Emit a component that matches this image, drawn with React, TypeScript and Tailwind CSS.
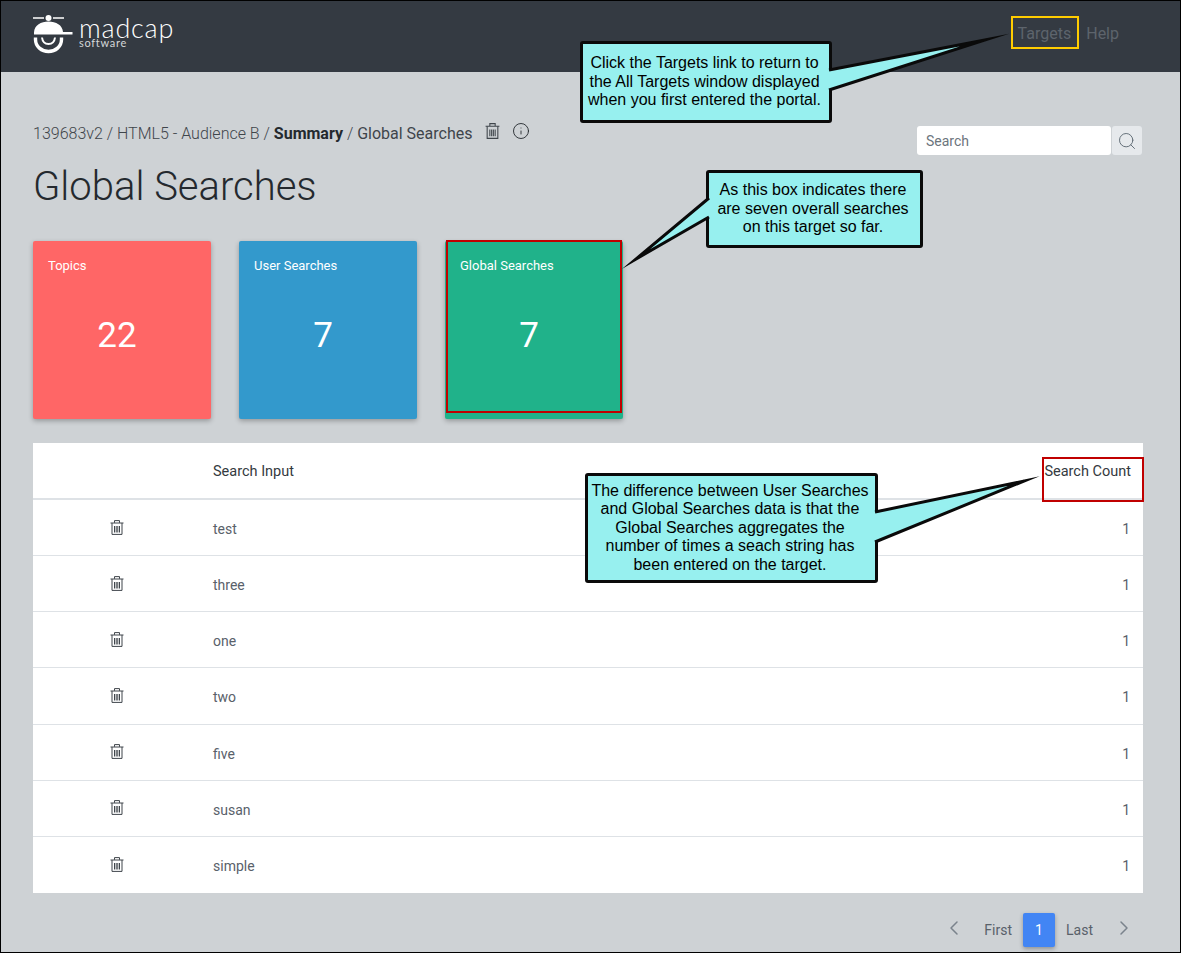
import { ChevronLeft, ChevronRight, Info, Search } from "lucide-react";

const rows = ["test", "three", "one", "two", "five", "susan", "simple"];

const cards = [
  { title: "Topics", count: "22", color: "bg-[#ff6666]" },
  { title: "User Searches", count: "7", color: "bg-[#3399cc]" },
  { title: "Global Searches", count: "7", color: "bg-[#20b28a]" },
];

const TrashIcon = ({ className }: { className?: string }) => (
  <svg viewBox="0 0 14 15" className={className} fill="none" stroke="currentColor">
    <path d="M0.5 3h13M4.5 2.8V0.6h5v2.2" strokeWidth="1" />
    <path d="M2 3v11.4h10V3" strokeWidth="1" />
    <path d="M4.5 6v6.5M6.2 6v6.5M7.8 6v6.5M9.5 6v6.5" strokeWidth="1" />
  </svg>
);

const Logo = () => (
  <div className="flex items-start">
    <svg viewBox="0 0 42 40" className="ml-[1px] mt-[13px] h-[40px] w-[42px] text-white" fill="currentColor">
      <path d="M0 3.2h11v1.6H0zM20 3.2h11v1.6H20z" />
      <circle cx="15.5" cy="4" r="3" />
      <path d="M1 18.5C1.500 11 8 7.500 15.500 7.500S29.500 11 30 18h9.500v2.500H1z" />
      <path
        d="M2.500 23.500v2c0 7 6 12 13 12s13-5 13-12v-2"
        fill="none"
        stroke="currentColor"
        strokeWidth="3.400"
      />
      <path
        d="M9 23.500c.5 4 3 6.500 6.500 6.500s6-2.500 6.500-6.500"
        fill="none"
        stroke="currentColor"
        strokeWidth="2"
      />
    </svg>
    <div className="ml-[4px] mt-[16px] text-white">
      <div className="font-['Lato'] text-[27px] font-light leading-[22px] tracking-[0.8px]">madcap</div>
      <div className="-mt-[1px] font-['Lato'] text-[11px] leading-[10px] tracking-[0.7px] text-[#d5d7d9]">software</div>
    </div>
  </div>
);

interface CalloutProps {
  boxClass: string;
  tailClass: string;
  viewBox: string;
  tail: string;
  children: React.ReactNode;
}

const Callout = ({ boxClass, tailClass, viewBox, tail, children }: CalloutProps) => (
  <>
    <div
      className={`absolute flex items-center justify-center rounded-[3px] border-[3px] border-[#0a0a0a] bg-[#97f0ef] pr-[3px] text-center font-['Liberation_Sans'] text-[16px] leading-[18.600px] text-black ${boxClass}`}
    >
      <div>{children}</div>
    </div>
    <svg viewBox={viewBox} className={`absolute ${tailClass}`}>
      <path d={tail} fill="#97f0ef" stroke="#0a0a0a" strokeWidth="3" strokeMiterlimit="30" />
    </svg>
  </>
);

export default function App() {
  return (
    <div className="relative h-[953px] w-[1181px] overflow-hidden border border-black bg-[#ced2d5] font-['Roboto',sans-serif]">
      {/* Шапка */}
      <header className="flex h-[71px] items-start justify-between bg-[#343a42] pl-[31px] pr-[61px]">
        <Logo />
        <nav className="mt-[23px] flex gap-[15px] text-[16px] leading-[20px] text-[#5d646c]">
          <a>Targets</a>
          <a>Help</a>
        </nav>
      </header>

      <main className="px-[32px]">
        <div className="flex justify-between">
          <div className="mt-[50px] flex items-start text-[16px] font-light leading-[24px] text-[#3f454b]">
            <span>
              139683v2 / HTML5 - Audience B / <b className="font-bold text-[#24292e]">Summary</b> /{" "}
              <span className="font-normal">Global Searches</span>
            </span>
            <TrashIcon className="ml-[12px] mt-[1px] h-[16px] w-[15px] text-[#3f454b]" />
            <Info className="ml-[12px] mt-[0px] h-[18px] w-[18px] text-[#24292e]" strokeWidth={1.2} />
          </div>
          <div className="mr-[6px] mt-[54px] flex h-[29px]">
            <div className="flex w-[194px] items-center rounded-[3px] bg-white pl-[9px] pt-[1px] text-[14px] text-[#6c757d]">
              Search
            </div>
            <div className="ml-[1px] flex w-[30px] items-center justify-center rounded-[3px] bg-[#e6e9ec]">
              <Search className="h-[20px] w-[20px] text-[#5a6670]" strokeWidth={1.1} />
            </div>
          </div>
        </div>

        <h1 className="mt-[8px] text-[40px] font-light leading-[48px] text-[#24292e]">Global Searches</h1>

        <div className="mt-[30px] flex gap-[28px]">
          {cards.map((card) => (
            <div
              key={card.title}
              className={`h-[178px] w-[178px] rounded-[2px] px-[15px] pt-[16px] text-white shadow-[0_2px_5px_rgba(0,0,0,0.28)] ${card.color}`}
            >
              <div className="text-[13px] leading-[18px]">{card.title}</div>
              <div className="mt-[39px] pr-[10px] text-center text-[35px] leading-[44px]">{card.count}</div>
            </div>
          ))}
        </div>

        <div className="mt-[24px] w-[1110px] bg-white text-[14px] text-[#59616a]">
          <div className="flex h-[57px] items-center border-b-2 border-[#dee2e6] pt-[3px] text-[14.500px] text-[#343a40]">
            <div className="w-[180px]" />
            <div className="flex-1">Search Input</div>
            <div className="pr-[12px]">Search Count</div>
          </div>
          {rows.map((row, i) => (
            <div
              key={row}
              className={`flex h-[56.140px] items-center ${i < rows.length - 1 ? "border-b border-[#dee2e6]" : ""}`}
            >
              <div className="w-[180px] pl-[77px]">
                <TrashIcon className="mb-[1px] h-[15px] w-[14px] text-[#3f454b]" />
              </div>
              <div className="flex-1 pt-[4px]">{row}</div>
              <div className="pr-[13px] pt-[4px]">1</div>
            </div>
          ))}
        </div>

        <div className="mt-[20px] flex h-[35px] items-center justify-end pr-[12px] text-[14px] text-[#59616a]">
          <ChevronLeft className="mb-[4px] h-[24px] w-[24px] text-[#7a838c]" strokeWidth={1.5} />
          <span className="ml-[18px]">First</span>
          <span className="ml-[11px] flex h-[34px] w-[32px] items-center justify-center rounded-[2px] bg-[#4285f4] text-white shadow-[0_2px_4px_rgba(0,0,0,0.3)]">
            1
          </span>
          <span className="ml-[11px]">Last</span>
          <ChevronRight className="mb-[4px] ml-[19px] h-[24px] w-[24px] text-[#7a838c]" strokeWidth={1.5} />
        </div>
      </main>

      {/* Выноски поверх страницы */}
      <div className="absolute left-[1010px] top-[15px] h-[33px] w-[68px] border-2 border-[#ffcc00]" />
      <div className="absolute left-[445px] top-[239px] h-[173px] w-[176px] border-2 border-[#c00000]" />
      <div className="absolute left-[1041px] top-[456px] h-[45px] w-[102px] border-2 border-[#c00000]" />

      <Callout
        boxClass="left-[579px] top-[40px] h-[82px] w-[252px]"
        tailClass="left-[800px] top-[20px] h-[90px] w-[220px]"
        viewBox="0 0 220 90"
        tail="M28 49 L184 19 L28 69"
      >
        Click the Targets link to return to
        <br />
        the All Targets window displayed
        <br />
        when you first entered the portal.
      </Callout>

      <Callout
        boxClass="left-[705px] top-[169px] h-[78px] w-[217px]"
        tailClass="left-[610px] top-[180px] h-[100px] w-[100px]"
        viewBox="0 0 100 100"
        tail="M98 17 L25 78 L98 36"
      >
        As this box indicates there
        <br />
        are seven overall searches
        <br />
        on this target so far.
      </Callout>

      <Callout
        boxClass="left-[584px] top-[472px] h-[110px] w-[293px]"
        tailClass="left-[870px] top-[465px] h-[90px] w-[180px]"
        viewBox="0 0 180 90"
        tail="M4 46 L153 15 L4 76"
      >
        The difference between User Searches
        <br />
        and Global Searches data is that the
        <br />
        Global Searches aggregates the
        <br />
        number of times a seach string has
        <br />
        been entered on the target.
      </Callout>
    </div>
  );
}
